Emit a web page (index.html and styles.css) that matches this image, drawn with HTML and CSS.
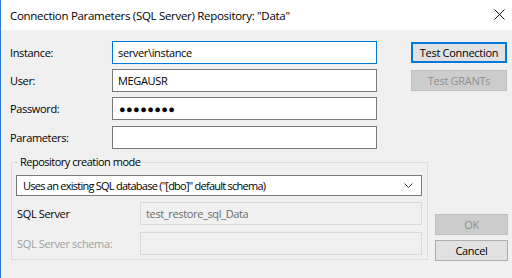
FILE: index.html
```html
<!DOCTYPE html>
<html lang="en">
<head>
  <meta charset="UTF-8" />
  <title>Connection Parameters</title>
  <link rel="stylesheet" href="styles.css">
</head>
<body>

<div class="dialog">
  <!-- Title bar -->
  <div class="titlebar">
    <span class="title">Connection Parameters (SQL Server) Repository: "Data"</span>
    <svg class="close" width="11" height="11" viewBox="0 0 11 11">
      <path d="M0.5 0.5 L10.5 10.5 M10.5 0.5 L0.5 10.5" stroke="#111" stroke-width="1" fill="none" />
    </svg>
  </div>

  <!-- Top part: login fields + test buttons -->
  <div class="top">
    <div class="fields">
      <div class="row">
        <label>Instance:</label>
        <div class="field focus">server\instance</div>
      </div>
      <div class="row">
        <label>User:</label>
        <div class="field">MEGAUSR</div>
      </div>
      <div class="row">
        <label>Password:</label>
        <div class="field dots">●●●●●●●●</div>
      </div>
      <div class="row params">
        <label>Parameters:</label>
        <div class="field"></div>
      </div>
    </div>
    <div class="side">
      <button class="btn wide default">Test Connection</button>
      <button class="btn wide" disabled>Test GRANTs</button>
    </div>
  </div>

  <!-- Bottom part: creation mode group + OK / Cancel -->
  <div class="bottom">
    <fieldset class="group">
      <legend>Repository creation mode</legend>
      <div class="select">
        <span>Uses an existing SQL database ("[dbo]" default schema)</span>
        <svg width="9" height="5" viewBox="0 0 9 5">
          <path d="M0.5 0.5 L4.5 4.5 L8.5 0.5" stroke="#444" stroke-width="1" fill="none" />
        </svg>
      </div>
      <div class="subrow">
        <label>SQL Server</label>
        <div class="field off">test_restore_sql_Data</div>
      </div>
      <div class="subrow muted">
        <label>SQL Server schema:</label>
        <div class="field off"></div>
      </div>
    </fieldset>
    <div class="actions">
      <button class="btn" disabled>OK</button>
      <button class="btn">Cancel</button>
    </div>
  </div>
</div>

</body>
</html>
```

FILE: styles.css
```css
body {
  margin: 0;
  font-family: "Open Sans", "Noto Sans", sans-serif;
  font-size: 11px;
  letter-spacing: -0.35px;
  color: #000;
}

.dialog {
  width: 512px;
  height: 278px;
  box-sizing: border-box;
  background-color: #f0f0f0;
  border-left: 1px solid #2b79d0;
  overflow: hidden;
}

/* Title bar */
.titlebar {
  height: 30px;
  background-color: #ffffff;
  display: flex;
  align-items: center;
  padding-left: 9px;
  padding-right: 7px;
}
.title {
  flex: 1;
  font-size: 11.5px;
  letter-spacing: -0.3px;
  white-space: nowrap;
}
.close {
  margin-top: -1px;
}

/* Top section */
.top {
  display: flex;
  padding: 11px 0 0 9px;
}
.fields {
  display: flex;
  flex-direction: column;
  gap: 5px;
}
.row {
  display: flex;
  align-items: center;
}
.row label {
  width: 102px;
}
.row.params {
  margin-top: 1px;
}

.field {
  box-sizing: border-box;
  width: 265px;
  height: 23px;
  padding: 0 5px;
  background-color: #ffffff;
  border: 1px solid #7a7a7a;
  display: flex;
  align-items: center;
  white-space: nowrap;
}
.field.focus {
  border-color: #0078d7;
}
.field.dots {
  font-size: 11px;
  letter-spacing: 0.4px;
  padding-left: 6px;
}
.field.off {
  width: 282px;
  background-color: #f0f0f0;
  border-color: #d9d9d9;
  color: #6d6d6d;
}

.side {
  display: flex;
  flex-direction: column;
  gap: 7px;
  margin-left: 34px;
  padding-top: 1px;
}

/* Buttons */
.btn {
  box-sizing: border-box;
  width: 73px;
  height: 21px;
  padding: 0;
  font-family: inherit;
  font-size: 11px;
  letter-spacing: -0.3px;
  color: #000;
  background-color: #e1e1e1;
  border: 1px solid #adadad;
}
.btn.wide {
  width: 96px;
}
.btn.default {
  border: 2px solid #0078d7;
}
.btn:disabled {
  background-color: #cccccc;
  border-color: #bfbfbf;
  color: #909090;
}

/* Bottom section */
.bottom {
  display: flex;
  align-items: flex-end;
  padding-left: 10px;
  margin-top: 5px;
}
.group {
  box-sizing: border-box;
  width: 416px;
  margin: 0;
  padding: 5px 5px 4px 4px;
  border: 1px solid #dcdcdc;
}
.group legend {
  padding: 0 2px;
  margin-left: 2px;
  line-height: 16px;
  letter-spacing: -0.5px;
}

.select {
  box-sizing: border-box;
  height: 21px;
  padding: 0 5px 0 6px;
  background-color: #ffffff;
  border: 1px solid #7a7a7a;
  display: flex;
  align-items: center;
  justify-content: space-between;
  white-space: nowrap;
  letter-spacing: -0.75px;
}
.select svg {
  margin-right: 3px;
}

.subrow {
  display: flex;
  align-items: center;
  margin-top: 6px;
}
.subrow + .subrow {
  margin-top: 7px;
}
.subrow label {
  width: 123px;
  padding-left: 1px;
}
.subrow.muted label {
  color: #a0a0a0;
}

.actions {
  display: flex;
  flex-direction: column;
  gap: 5px;
  margin-left: 7px;
  margin-bottom: -1px;
}
```
